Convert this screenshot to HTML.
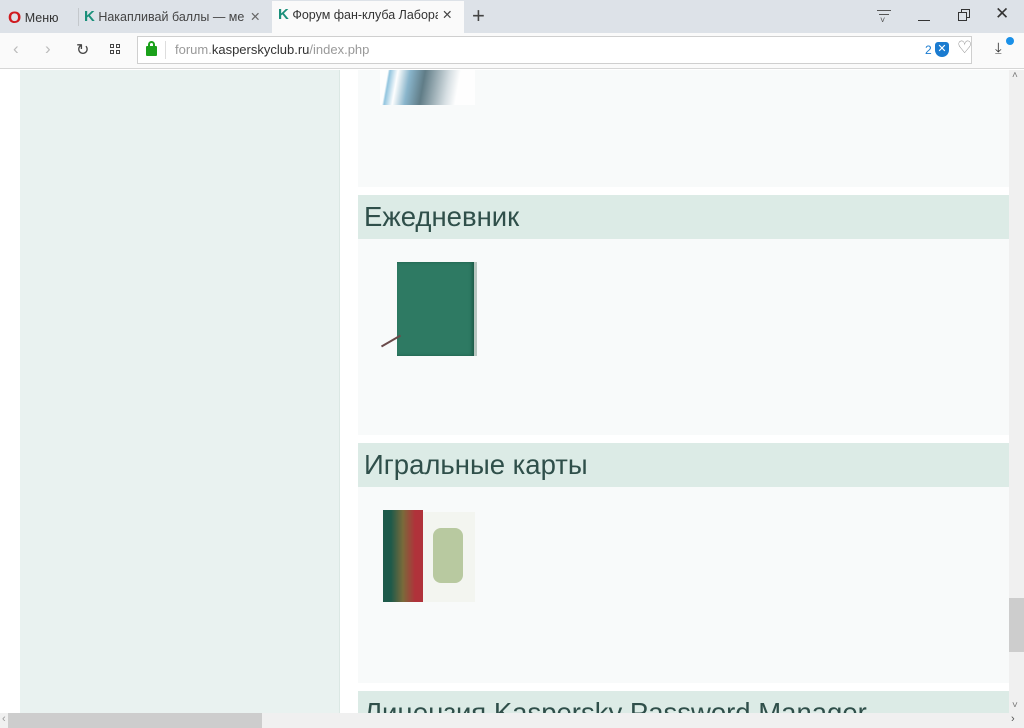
<!DOCTYPE html>
<html><head><meta charset="utf-8"><style>
*{margin:0;padding:0;box-sizing:border-box}
body{width:1024px;height:728px;overflow:hidden;background:#fff;font-family:"Liberation Sans",sans-serif;position:relative}
.abs{position:absolute}
.tabbar{left:0;top:0;width:1024px;height:33px;background:#dde2e8}
.tab{top:3px;height:30px;font-size:12.5px;color:#333;line-height:28px}
.toolbar{left:0;top:33px;width:1024px;height:36px;background:#fafafa;border-bottom:1px solid #d6d6d6}
.url{left:137px;top:36px;width:835px;height:28px;background:#fff;border:1px solid #cfcfcf}
.side{left:20px;top:70px;width:320px;height:643px;background:#e9f2f0;border-right:1px solid #dbe8e4}
.content{left:358px;top:70px;width:651px;height:643px;background:#f8fafa}
.gap{left:358px;width:651px;height:8px;background:#fff}
.h{left:358px;width:651px;height:44px;background:#dcebe6;color:#2f4f4a;font-size:27.5px;padding-left:6px;line-height:44px}
</style></head><body>
<div class="abs tabbar"></div>
<div class="abs tab" style="left:8px;width:70px"><span style="color:#d01b20;font-weight:bold;font-size:17px;position:relative;top:1px">O</span> Меню</div>
<div class="abs" style="left:78px;top:8px;width:1px;height:18px;background:#c4c8cc"></div>
<div class="abs tab" style="left:84px;width:186px;color:#444;overflow:hidden;white-space:nowrap"><span style="color:#1a8f7a;font-weight:bold;font-size:15px">K</span> Накапливай баллы — ме<span style="position:absolute;left:164px;top:0;background:#dde2e8;color:#666;padding-left:2px">✕</span></div>
<div class="abs tab" style="left:272px;top:1px;height:32px;width:192px;background:#fafafa;padding-left:6px;overflow:hidden;white-space:nowrap"><span style="color:#1a8f7a;font-weight:bold;font-size:15px">K</span> Форум фан-клуба Лаборатории<span style="position:absolute;left:166px;top:0;width:26px;height:32px;background:#fafafa;color:#444;padding-left:4px">✕</span></div>
<div class="abs" style="left:472px;top:3px;font-size:22px;color:#444">+</div>
<div class="abs" style="left:877px;top:10px;width:14px;height:1px;background:#555"></div>
<div class="abs" style="left:879px;top:14px;width:10px;height:1px;background:#555"></div>
<div class="abs" style="left:880px;top:15px;font-size:9px;color:#555">˅</div>
<div class="abs" style="left:918px;top:20px;width:12px;height:1px;background:#333"></div>
<div class="abs" style="left:961px;top:9px;width:9px;height:9px;border:1px solid #333"></div>
<div class="abs" style="left:958px;top:12px;width:9px;height:9px;border:1px solid #333;background:#dde2e8"></div>
<div class="abs" style="left:995px;top:4px;font-size:17px;color:#333">✕</div>
<div class="abs toolbar"></div>
<div class="abs" style="left:13px;top:39px;font-size:17px;color:#bbb">‹</div>
<div class="abs" style="left:45px;top:39px;font-size:17px;color:#bbb">›</div>
<div class="abs" style="left:76px;top:40px;font-size:16px;color:#444">↻</div>
<div class="abs" style="left:110px;top:44px;width:4px;height:4px;border:1.3px solid #444"></div>
<div class="abs" style="left:116px;top:44px;width:4px;height:4px;border:1.3px solid #444"></div>
<div class="abs" style="left:110px;top:50px;width:4px;height:4px;border:1.3px solid #444"></div>
<div class="abs" style="left:116px;top:50px;width:4px;height:4px;border:1.3px solid #444"></div>
<div class="abs url"></div>
<div class="abs" style="left:146px;top:46px;width:11px;height:10px;background:#1ba11b;border-radius:1px"></div>
<div class="abs" style="left:148px;top:41px;width:7px;height:7px;border:2px solid #1ba11b;border-bottom:none;border-radius:4px 4px 0 0"></div>
<div class="abs" style="left:165px;top:41px;width:1px;height:18px;background:#ddd"></div>
<div class="abs" style="left:175px;top:42px;font-size:13px;color:#999">forum.<span style="color:#333">kasperskyclub.ru</span>/index.php</div>
<div class="abs" style="left:925px;top:43px;font-size:12px;color:#1a7bd0">2</div>
<div class="abs" style="left:935px;top:42px;width:14px;height:15px;background:#1a7bd0;border-radius:3px 3px 7px 7px;color:#fff;font-size:11px;text-align:center;line-height:15px">✕</div>
<div class="abs" style="left:957px;top:38px;font-size:17px;color:#888">♡</div>
<div class="abs" style="left:995px;top:40px;font-size:15px;color:#333">⤓</div>
<div class="abs" style="left:1006px;top:37px;width:8px;height:8px;border-radius:50%;background:#1a90e8"></div>
<div class="abs side"></div>
<div class="abs content"></div>
<div class="abs gap" style="top:187px"></div>
<div class="abs gap" style="top:435px"></div>
<div class="abs gap" style="top:683px"></div>
<div class="abs" style="left:380px;top:70px;width:95px;height:35px;background:linear-gradient(100deg,#fff 0,#fff 8%,#7ab8d8 10%,#fff 18%,#6ea4c0 30%,#3a5d6a 45%,#cfd9de 70%,#fff 80%);opacity:.8"></div>
<div class="abs h" style="top:195px">Ежедневник</div>
<div class="abs" style="left:397px;top:262px;width:80px;height:94px;background:#2e7a63;border-right:3px solid #b8c6c0;box-shadow:inset -2px 0 3px #1d5a48"></div>
<div class="abs" style="left:380px;top:340px;width:22px;height:2px;background:#6a4a4a;transform:rotate(-30deg)"></div>
<div class="abs h" style="top:443px">Игральные карты</div>
<div class="abs" style="left:383px;top:510px;width:40px;height:92px;background:linear-gradient(90deg,#1e5a4a 20%,#7a6a3a 50%,#b0323a 80%)"></div>
<div class="abs" style="left:423px;top:512px;width:52px;height:90px;background:#f3f5f0"></div>
<div class="abs" style="left:433px;top:528px;width:30px;height:55px;background:#b8c9a0;border-radius:8px"></div>
<div class="abs h" style="top:691px;height:22px;overflow:hidden;line-height:44px">Лицензия Kaspersky Password Manager</div>
<div class="abs" style="left:1009px;top:70px;width:15px;height:643px;background:#f0f0f0"></div>
<div class="abs" style="left:1012px;top:70px;font-size:10px;color:#777">˄</div>
<div class="abs" style="left:1009px;top:598px;width:15px;height:54px;background:#cdcdcd"></div>
<div class="abs" style="left:1012px;top:700px;font-size:10px;color:#777">˅</div>
<div class="abs" style="left:0;top:713px;width:1024px;height:15px;background:#f0f0f0"></div>
<div class="abs" style="left:8px;top:713px;width:254px;height:15px;background:#cdcdcd"></div>
<div class="abs" style="left:2px;top:713px;font-size:11px;color:#999">‹</div>
<div class="abs" style="left:1011px;top:713px;font-size:11px;color:#555">›</div>
</body></html>
